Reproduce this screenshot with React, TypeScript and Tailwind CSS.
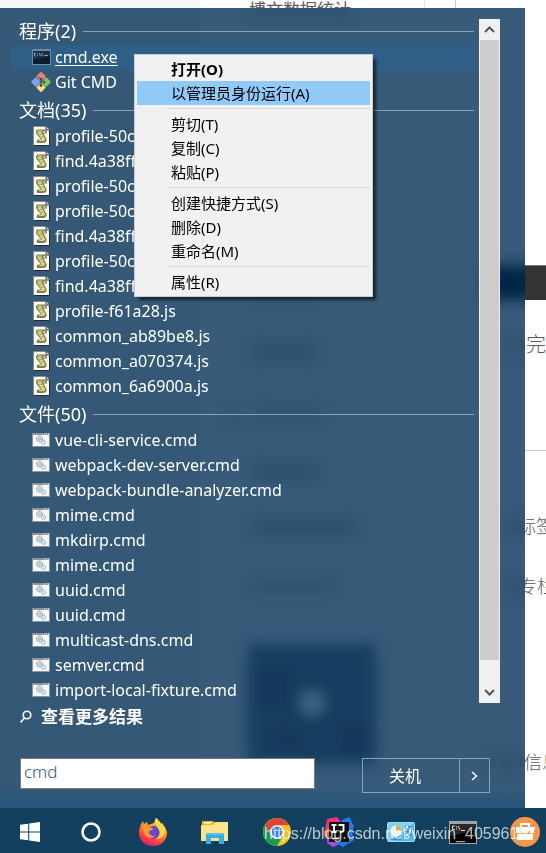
import React from 'react';

type IconKind = 'console' | 'git' | 'script' | 'batch';

const programs: { name: string; icon: IconKind; active?: boolean }[] = [
  { name: 'cmd.exe', icon: 'console', active: true },
  { name: 'Git CMD', icon: 'git' },
];

const documents = [
  'profile-50c3d1.js',
  'find.4a38ff5.js',
  'profile-50c3d1.js',
  'profile-50c3d1.js',
  'find.4a38ff5.js',
  'profile-50c3d1.js',
  'find.4a38ff5.js',
  'profile-f61a28.js',
  'common_ab89be8.js',
  'common_a070374.js',
  'common_6a6900a.js',
];

const files = [
  'vue-cli-service.cmd',
  'webpack-dev-server.cmd',
  'webpack-bundle-analyzer.cmd',
  'mime.cmd',
  'mkdirp.cmd',
  'mime.cmd',
  'uuid.cmd',
  'uuid.cmd',
  'multicast-dns.cmd',
  'semver.cmd',
  'import-local-fixture.cmd',
];

const menuGroups = [
  ['打开(O)', '以管理员身份运行(A)'],
  ['剪切(T)', '复制(C)', '粘贴(P)'],
  ['创建快捷方式(S)', '删除(D)', '重命名(M)'],
  ['属性(R)'],
];

const ConsoleIcon = () => (
  <svg width="19" height="16" viewBox="0 0 19 16" aria-hidden="true">
    <rect width="19" height="16" fill="#6f8ba3" />
    <rect x="1" y="2" width="17" height="13" fill="#0a1d30" />
    <path d="M1 2h17v5L1 11z" fill="#1b3147" />
    <path d="M4 4H2.500v3H4M5.500 4.500v.8M5.500 6.200v.8M7 4l1.500 3M10 4v3M12 6.500h4" stroke="#aebbc7" strokeWidth=".8" fill="none" />
  </svg>
);

const GitIcon = () => (
  <svg width="20" height="20" viewBox="0 0 20 20" aria-hidden="true">
    <rect x="6.500" y="1" width="7" height="7" rx="1" transform="rotate(45 10 4.500)" fill="#f27d78" />
    <rect x="1.300" y="6.500" width="7" height="7" rx="1" transform="rotate(45 4.800 10)" fill="#78a8f5" />
    <rect x="11.700" y="6.500" width="7" height="7" rx="1" transform="rotate(45 15.200 10)" fill="#7dc855" />
    <rect x="6.500" y="11.900" width="7" height="7" rx="1" transform="rotate(45 10 15.400)" fill="#fadb74" />
    <path d="M7.500 4.500l5.500 5.500M10 7v6.500" stroke="#3c4652" strokeWidth="1" />
    <circle cx="10" cy="7" r="1.200" fill="#3c4652" />
    <circle cx="13" cy="10" r="1.300" fill="#3c4652" />
    <circle cx="10" cy="13.500" r="1.400" fill="#3c4652" />
  </svg>
);

const ScriptIcon = () => (
  <svg width="17" height="20" viewBox="0 0 17 20" aria-hidden="true">
    <path d="M.5.5h12.500l3.500 3.500v15.500H.5z" fill="#fbfbf8" stroke="#8b8b84" />
    <path d="M16.500 4v15.500H.5" fill="none" stroke="#26292b" />
    <path d="M13 .5V4h3.500" fill="#d9d9d4" stroke="#35383a" />
    <path d="M4.500 3.500h6.500q3 .5 3 4h-3.500l3 5.500q.5 3.500-3 4H4.500q-2-2 .5-3.500h3L3.500 8q-1.500-3 1-4.500z" fill="#77775f" />
    <path d="M5 4.500h4.500q-2 1.500-.5 3l3 5q.5 2.500-2 2.500H5.500q0-1 2-1h1.500L4.800 7.500q-1-2 .2-3z" fill="#e2dc6a" />
    <path d="M10.500 5q2 .3 2 1.800h-1.800q-.9-.9-.2-1.800z" fill="#f4f2c8" />
    <path d="M5 6h3M6 8.500h3M7.500 11h3M6 15.800h5" stroke="#8d8b50" strokeWidth=".7" />
  </svg>
);

const BatchIcon = () => (
  <svg width="18" height="14" viewBox="0 0 18 14" aria-hidden="true">
    <rect x=".5" y=".5" width="17" height="13" fill="#f7f8f8" stroke="#8e9499" />
    <path d="M0 1h18" stroke="#8e9499" strokeWidth="2" />
    <path d="M12 1h1M14 1h1M16 1h1" stroke="#e8e8e8" />
    <circle cx="7.500" cy="6" r="2.900" fill="#e3e5e6" stroke="#7b8388" strokeDasharray="1.200 .6" />
    <circle cx="7.500" cy="6" r="1" fill="#fff" stroke="#8b9297" strokeWidth=".7" />
    <circle cx="11.500" cy="9.300" r="2.100" fill="#d8eaf7" stroke="#6fa6cf" strokeDasharray="1.100 .5" />
  </svg>
);

const icons: Record<IconKind, React.FC> = {
  console: ConsoleIcon,
  git: GitIcon,
  script: ScriptIcon,
  batch: BatchIcon,
};

const SectionHeading = ({ children }: { children: React.ReactNode }) => (
  <h2 className="flex h-[29px] items-center gap-[7px] pl-2 pr-px text-lg leading-6">
    {children}
    <span className="mt-0.5 h-px flex-1 bg-[#7fa3c1]" />
  </h2>
);

const ResultRow = ({ name, icon, active }: { name: string; icon: IconKind; active?: boolean }) => {
  const Icon = icons[icon];
  return (
    <li>
      <button
        type="button"
        className={`flex h-[25px] w-full items-center gap-1 pb-0.5 pl-5 text-left text-base leading-5 ${active ? 'bg-[#2e5f86] underline underline-offset-2' : ''}`}
      >
        <span className="flex w-5 shrink-0 justify-center">
          <Icon />
        </span>
        {name}
      </button>
    </li>
  );
};

/* Web page behind the start menu */
const PageBehind = () => (
  <div className="absolute inset-0 bg-white text-lg leading-6 text-[#5a5a5a]" aria-hidden="true">
    <div className="absolute top-0 left-0 h-full w-[200px] bg-[#f5f6f7]" />
    <div className="absolute top-0 left-[424px] h-2 w-px bg-[#e4e4e4]" />
    <div className="absolute top-0 left-[455px] h-2 w-px bg-[#cccccc]" />
    <span className="absolute -top-0.5 left-[249px] text-[17px] whitespace-nowrap">博文数据统计</span>
    <div className="absolute top-[265px] right-0 h-[35px] w-12 border-t border-[#777777] bg-[#333333]" />
    <div className="absolute top-[450px] right-0 h-px w-12 bg-[#cccccc]" />
    <span className="absolute top-[333px] left-[506px] text-xl leading-6 font-light whitespace-nowrap">写完</span>
    <span className="absolute top-[514px] left-[518px] font-light whitespace-nowrap">标签</span>
    <span className="absolute top-[574px] left-[519px] font-light whitespace-nowrap">专栏</span>
    <span className="absolute top-[750px] left-[524px] font-light whitespace-nowrap">信息</span>
  </div>
);

/* Blurred shapes that show through the translucent menu */
const MenuBackdrop = () => (
  <svg className="absolute top-0 left-0 h-full w-full" aria-hidden="true">
    <defs>
      <filter id="soft" x="-30%" y="-100%" width="160%" height="300%">
        <feGaussianBlur stdDeviation="7" />
      </filter>
      <linearGradient id="foot" x1="0" y1="0" x2="0" y2="1">
        <stop offset="0" stopColor="#24557a" stopOpacity="0" />
        <stop offset="1" stopColor="#24557a" />
      </linearGradient>
    </defs>
    <rect x="200" width="100%" height="100%" fill="#375b79" />
    <g filter="url(#soft)" fill="#274b68">
      <rect x="252" y="0" width="100" height="6" />
      <rect x="252" y="276" width="68" height="14" opacity=".7" />
      <rect x="252" y="337" width="66" height="14" opacity=".8" />
      <rect x="228" y="400" width="12" height="16" opacity=".5" />
      <rect x="256" y="400" width="66" height="12" opacity=".6" />
      <rect x="252" y="457" width="68" height="14" opacity=".8" />
      <rect x="252" y="513" width="104" height="13" opacity=".8" />
      <rect x="252" y="571" width="82" height="13" opacity=".7" />
      <rect x="505" y="330" width="22" height="14" opacity=".7" />
      <rect x="505" y="513" width="22" height="12" opacity=".8" />
      <rect x="505" y="573" width="22" height="12" opacity=".7" />
      <rect x="488" y="748" width="38" height="14" opacity=".5" />
    </g>
    <g filter="url(#soft)">
      <rect x="487" y="257" width="80" height="35" fill="#042746" />
      <rect x="248" y="636" width="128" height="120" fill="#193e5e" />
      <path d="M256 660h36v40h-36zM338 716h34v30h-34zM270 720h30v20h-30z" fill="#10345a" opacity=".6" />
      <circle cx="312" cy="695" r="12" fill="#3b6787" />
    </g>
    <svg y="100%" overflow="visible">
      <rect y="-20" width="100%" height="20" fill="url(#foot)" />
    </svg>
  </svg>
);

const Scrollbar = () => (
  <div className="mt-[3px] ml-1 flex w-[21px] flex-col bg-[#f0f0f0]">
    <button type="button" aria-label="Scroll up" className="flex h-[21px] items-center justify-center">
      <svg width="11" height="7" viewBox="0 0 11 7" fill="none" stroke="#555555" strokeWidth="2">
        <path d="M1 6l4.500-4.500L10 6" />
      </svg>
    </button>
    <div className="mx-px flex-1 bg-[#cdcdcd]" />
    <div className="h-[22px]" />
    <button type="button" aria-label="Scroll down" className="flex h-[21px] items-center justify-center">
      <svg width="11" height="7" viewBox="0 0 11 7" fill="none" stroke="#555555" strokeWidth="2">
        <path d="M1 1l4.500 4.500L10 1" />
      </svg>
    </button>
  </div>
);

const ContextMenu = () => (
  <div
    role="menu"
    className="absolute top-[54px] left-[134px] w-[239px] border border-[#cccccc] bg-[#f1f1f1] p-[2px] text-[15px] leading-6 text-black shadow-[4px_4px_3px_-1px_rgba(0,0,0,0.6)]"
  >
    {menuGroups.map((group, g) => (
      <div key={g} role="group">
        {g > 0 && <div className="my-[3px] ml-[30px] h-px bg-[#d7d7d7]" />}
        {group.map((label, i) => (
          <button
            key={label}
            type="button"
            role="menuitem"
            className={`block h-6 w-full pl-[34px] text-left ${g === 0 && i === 0 ? 'font-bold' : ''} ${g === 0 && i === 1 ? 'bg-[#91c9f7]' : ''}`}
          >
            {label}
          </button>
        ))}
      </div>
    ))}
  </div>
);

const WindowsIcon = () => (
  <svg width="20" height="20" viewBox="0 0 20 20" fill="#fff">
    <path d="M0 2.800L8.200 1.700v7.800H0zM9.200 1.500L20 0v9.500H9.200zM0 10.500h8.200v7.800L0 17.200zM9.200 10.500H20V20L9.200 18.500z" />
  </svg>
);

const CortanaIcon = () => (
  <svg width="20" height="20" viewBox="0 0 20 20">
    <circle cx="10" cy="10" r="8.500" fill="none" stroke="#fff" strokeWidth="2.600" />
  </svg>
);

const FirefoxIcon = () => (
  <svg width="30" height="30" viewBox="0 0 30 30">
    <defs>
      <linearGradient id="fox" x1=".8" y1="0" x2=".3" y2="1">
        <stop offset="0" stopColor="#fff04a" />
        <stop offset=".4" stopColor="#ff9a25" />
        <stop offset=".75" stopColor="#ff4045" />
        <stop offset="1" stopColor="#e5196f" />
      </linearGradient>
    </defs>
    <path d="M3 7l2-3 1 3 3-2 1 3 6-2 2-5c2 1 4 4 5 6l1-1c3 4 5 7 5 10a14 13 0 0 1-28 0c0-4 1-6 2-9z" fill="url(#fox)" />
    <circle cx="15" cy="15.500" r="6.500" fill="#7342d8" />
    <path d="M15 9c4-1 7 2 7 6 0 3-2 5-4 6 1-4 0-8-3-9z" fill="#4b4fc9" opacity=".6" />
    <path d="M4 9c3-1 6 0 7 1l4 1c0 2-2 2-4 3-1 3 2 5 6 5-4 4-10 1-11-4z" fill="#ff9b2b" />
    <path d="M18 1c-3 5 1 8 3 12 2 5-1 8-4 9 8 0 11-5 10-10-1-5-6-6-9-11z" fill="#ffdd3c" opacity=".9" />
  </svg>
);

const ExplorerIcon = () => (
  <svg width="28" height="24" viewBox="0 0 28 24">
    <path d="M1 1h11l2 2h13v6H1z" fill="#f3b62f" />
    <path d="M3 2h7v2H3z" fill="#fff0b0" />
    <path d="M0 5h12l2-3h13v19H0z" fill="#ffe28c" />
    <path d="M5 13h18v11h-5v-6h-8v6H5z" fill="#35ade5" />
    <path d="M5 13h18v2H5z" fill="#56c2f1" />
  </svg>
);

const ChromeIcon = () => (
  <svg width="28" height="28" viewBox="0 0 28 28">
    <circle cx="14" cy="14" r="14" fill="#fbc116" />
    <path d="M14 7h12.100A14 14 0 0 0 1.900 7L8 17.500z" fill="#db4437" />
    <path d="M1.900 7A14 14 0 0 0 14 28l6-10.500-6 3.500-6-3.500z" fill="#159b54" />
    <circle cx="14" cy="14" r="7" fill="#f2f2f2" />
    <circle cx="14" cy="14" r="5.400" fill="#4383ec" />
  </svg>
);

const IdeaIcon = () => (
  <svg width="30" height="30" viewBox="0 0 30 30">
    <path d="M3 2l10-2 6 8-10 9-9 2z" fill="#f7317b" />
    <path d="M0 14l6-4 8 10-8 4-5-4z" fill="#f56b22" />
    <path d="M3 20l8-3 7 9-9 4-6-4z" fill="#b947dc" />
    <path d="M18 3l7-3 5 9-2 6 2 8-11 7-9-5z" fill="#2876ea" />
    <rect x="5" y="5" width="20" height="20" fill="#111" />
    <path d="M7.500 8h5M10 8v7M7.500 15h5M14.500 8h5v5.500q0 1.500-3.500 1.500" stroke="#fff" strokeWidth="1.900" fill="none" />
    <path d="M8 21.500h7" stroke="#fff" strokeWidth="1.600" />
  </svg>
);

const PanelIcon = () => (
  <svg width="28" height="20" viewBox="0 0 28 20">
    <rect x=".5" y=".5" width="27" height="19" rx="1" fill="#58b7ec" stroke="#99dcfa" />
    <path d="M1 1h26L6 19H1z" fill="#83cef5" />
    <circle cx="9" cy="9" r="5.500" fill="#e9f6fd" />
    <path d="M9 9V3.500A5.500 5.500 0 0 1 14.500 9z" fill="#f0aa34" />
    <path d="M18 5h7M18 9h7M18 13h7M4 17h10" stroke="#2b83bd" strokeWidth="1.600" />
    <path d="M20 4v2M23 8v2M20 12v2" stroke="#eaf8ff" strokeWidth="2" />
  </svg>
);

const TerminalIcon = () => (
  <svg width="28" height="23" viewBox="0 0 28 23">
    <rect width="28" height="23" fill="#9ea4a8" />
    <rect x="1" y="3" width="26" height="19" fill="#050505" />
    <path d="M1 3h26v6L1 15z" fill="#292929" />
    <path d="M6 5H3.500v3.500H6M7.500 5.500v1M7.500 7.500v1M9 5l2 4M12 9.500h4" stroke="#ddd" fill="none" />
  </svg>
);

const ToolboxIcon = () => (
  <svg width="30" height="30" viewBox="0 0 30 30">
    <circle cx="15" cy="15" r="15" fill="#f79646" />
    <path d="M11 10V7h8v3" fill="none" stroke="#fff" strokeWidth="2" />
    <path d="M6 10h18v6H6zM7 17h16v6H7z" fill="#fff" />
    <path d="M10 14l3 3M20 14l-3 3" stroke="#f79646" />
  </svg>
);

const taskbarApps = [
  { label: 'Cortana', Icon: CortanaIcon },
  { label: 'Firefox', Icon: FirefoxIcon },
  { label: 'File Explorer', Icon: ExplorerIcon },
  { label: 'Chrome', Icon: ChromeIcon },
  { label: 'IntelliJ IDEA', Icon: IdeaIcon },
  { label: 'Control Panel', Icon: PanelIcon },
  { label: 'Command Prompt', Icon: TerminalIcon },
  { label: 'Toolbox', Icon: ToolboxIcon },
];

const Taskbar = () => (
  <footer className="relative flex h-[45px] overflow-hidden bg-[#13405f] pt-[3px]">
    <button type="button" aria-label="Start" className="flex w-[60px] shrink-0 items-center justify-center">
      <WindowsIcon />
    </button>
    {taskbarApps.map(({ label, Icon }) => (
      <button key={label} type="button" aria-label={label} className="flex w-[62px] shrink-0 items-center justify-center">
        <Icon />
      </button>
    ))}
    <span className="absolute top-4 left-[264px] font-['Liberation_Sans',sans-serif] text-base leading-5 whitespace-nowrap text-white/70">
      https://blog.csdn.net/weixin_40596197
    </span>
  </footer>
);

const App: React.FC = () => {
  return (
    <div className="relative flex min-h-screen flex-col overflow-hidden font-['Noto_Sans','Noto_Sans_CJK_SC',sans-serif]">
      <PageBehind />

      <main className="relative mt-2 mr-[21px] flex flex-1 flex-col bg-[#355876] text-white">
        <MenuBackdrop />

        <div className="relative flex pt-2 pr-[25px] pl-[11px]">
          <div className="min-w-0 flex-1">
            <SectionHeading>程序(2)</SectionHeading>
            <ul>
              {programs.map((item) => (
                <ResultRow key={item.name} {...item} />
              ))}
            </ul>
            <SectionHeading>文档(35)</SectionHeading>
            <ul>
              {documents.map((name, i) => (
                <ResultRow key={i} name={name} icon="script" />
              ))}
            </ul>
            <SectionHeading>文件(50)</SectionHeading>
            <ul>
              {files.map((name, i) => (
                <ResultRow key={i} name={name} icon="batch" />
              ))}
            </ul>
          </div>
          <Scrollbar />
        </div>

        <a href="#results" className="relative flex h-7 items-center gap-[9px] self-start pl-5 text-[17px] leading-6 font-bold">
          <svg width="12" height="14" viewBox="0 0 12 14" fill="none" stroke="#fff" strokeWidth="1.600">
            <circle cx="7" cy="5" r="3.800" />
            <path d="M4.500 8L.5 12.500" />
          </svg>
          查看更多结果
        </a>

        <div className="relative mt-[27px] mb-[15px] flex items-start justify-between pr-[35px] pl-5">
          <input
            type="text"
            aria-label="Search programs and files"
            defaultValue="cmd"
            className="h-[31px] w-[295px] border border-[#7a7a7a] bg-white px-[3px] pb-1 text-[17px] leading-6 font-light text-[#2f5876] outline-none"
          />
          <div className="flex h-[35px] w-32 border border-[#7ea4c4]">
            <button type="button" className="flex-1 pr-3 text-base leading-6">
              关机
            </button>
            <button type="button" aria-label="Shutdown options" className="flex w-[30px] items-center justify-center border-l border-[#7ea4c4]">
              <svg width="7" height="10" viewBox="0 0 7 10" fill="none" stroke="#fff" strokeWidth="1.500">
                <path d="M1 1l4.500 4L1 9" />
              </svg>
            </button>
          </div>
        </div>
      </main>

      <Taskbar />
      <ContextMenu />
    </div>
  );
};

export default App;
